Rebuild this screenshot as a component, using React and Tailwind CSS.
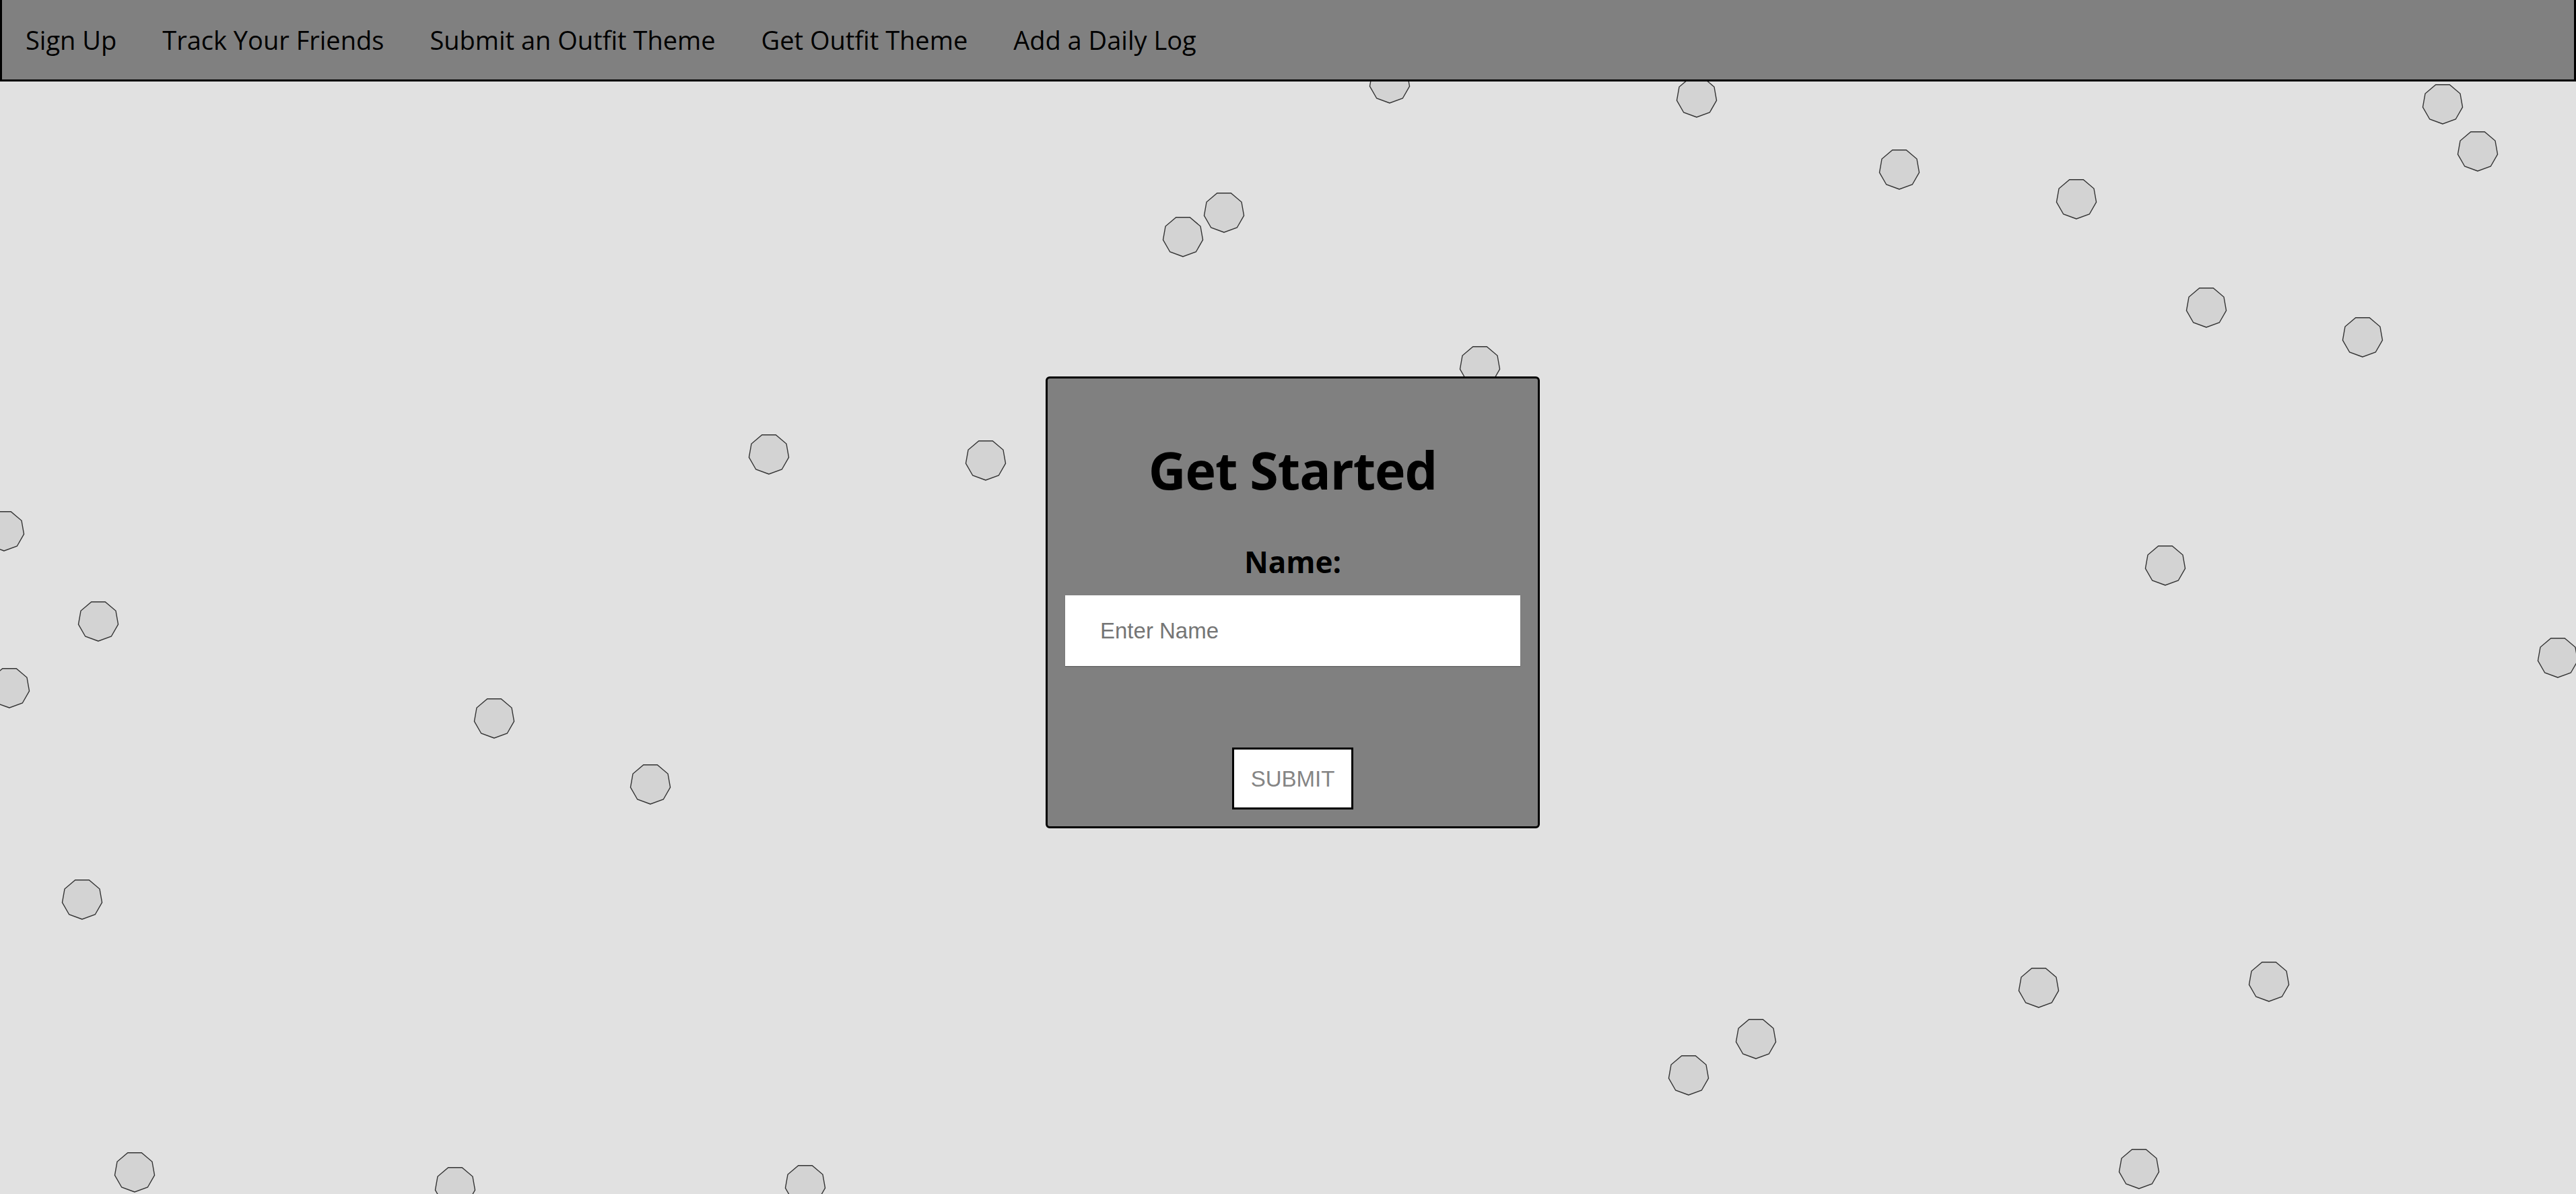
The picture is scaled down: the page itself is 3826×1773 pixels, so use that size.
import React from "react";

const R = 30;
const centers = [
  [2064, 123], [2520, 144], [3628, 154], [3680, 224], [2821, 251], [3084, 295],
  [1818, 315], [1757, 351], [3277, 456], [3509, 500], [2198, 543], [1142, 674],
  [1464, 683], [6, 788], [146, 922], [14, 1021], [3216, 839], [3799, 976],
  [734, 1066], [966, 1164], [122, 1335], [3028, 1466], [3370, 1457], [2608, 1542],
  [2508, 1596], [200, 1740], [676, 1762], [1196, 1759], [3177, 1735],
];

function nonagon(cx, cy) {
  const pts = [];
  for (let k = 0; k < 9; k++) {
    const a = ((90 + k * 40) * Math.PI) / 180;
    pts.push(`${(cx + R * Math.cos(a)).toFixed(2)},${(cy + R * Math.sin(a)).toFixed(2)}`);
  }
  return pts.join(" ");
}

const navItems = ["Sign Up", "Track Your Friends", "Submit an Outfit Theme", "Get Outfit Theme", "Add a Daily Log"];

export default function App() {
  return (
    <div className="relative w-full h-[1773px] overflow-hidden bg-[#e1e1e1]">
      <svg className="absolute inset-0 w-full h-full pointer-events-none" width="3826" height="1773">
        {centers.map(([x, y], i) => (
          <polygon key={i} points={nonagon(x, y)} fill="#d3d3d3" stroke="#333" strokeWidth="1.4" />
        ))}
      </svg>

      <nav className="relative z-10 flex items-center h-[121px] pl-[1px] bg-[#808080] border-l-[3px] border-r-[3px] border-b-[3px] border-black font-['Open_Sans',sans-serif] text-[38px] leading-none text-black">
        {navItems.map((t) => (
          <a key={t} className="px-[34px] whitespace-nowrap cursor-pointer">{t}</a>
        ))}
      </nav>

      <main className="relative z-10 flex justify-center pl-[14px] pt-[438px]">
        <div className="w-[734px] h-[671px] bg-[#808080] border-[3px] border-black rounded-[6px] flex flex-col items-center font-['Open_Sans',sans-serif] text-black">
          <h1 className="mt-[97px] text-[77px] leading-none font-bold tracking-[-1px] whitespace-nowrap">Get Started</h1>
          <label className="mt-[76px] text-[44px] leading-none font-bold">Name:</label>
          <input
            type="text"
            placeholder="Enter Name"
            className="mt-[28px] w-[676px] h-[105px] bg-white pl-[52px] outline-none font-['Liberation_Sans',Arial,sans-serif] text-[33px] text-black placeholder:text-[#757575] shadow-[0_1px_1px_rgba(0,0,0,0.25)]"
          />
          <button className="mt-[121px] w-[180px] h-[92px] bg-white border-[3px] border-black font-['Liberation_Sans',Arial,sans-serif] text-[33px] text-[#858585] leading-none">
            SUBMIT
          </button>
        </div>
      </main>
    </div>
  );
}
